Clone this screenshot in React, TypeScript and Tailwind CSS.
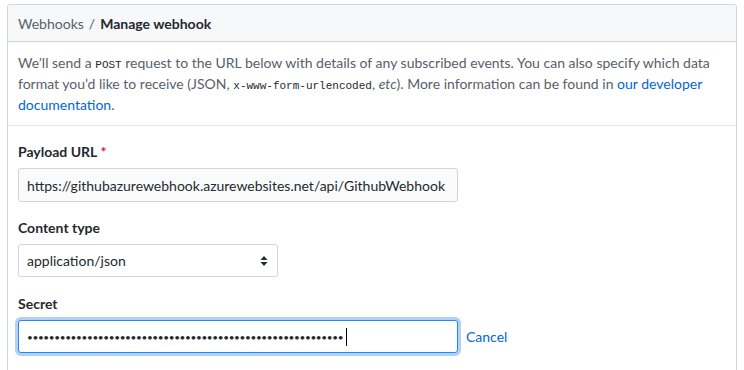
import React from "react";

export default function App() {
  const dots = "•".repeat(58);
  const mono = { fontFamily: '"Liberation Mono", monospace' };
  return (
    <div
      className="w-[744px] h-[370px] overflow-hidden bg-white pt-[4px] pl-[7px] pr-[7px]"
      style={{ fontFamily: 'Lato, "Noto Sans", sans-serif' }}
    >
      <div className="border border-[#d1d5da] rounded-t-[3px] h-[370px] text-[14px]">
        <div className="h-[37px] bg-[#f6f8fa] border-b border-[#d1d5da] flex items-center px-[10px] rounded-t-[3px] whitespace-nowrap">
          <span className="text-[#586069]">Webhooks</span>
          <span className="text-[#586069] mx-[5px]">/</span>
          <span className="text-[#24292e] font-bold">Manage webhook</span>
        </div>
        <div className="px-[10px] pt-[10px] pb-[10px] text-[#586069] leading-[21px] border-b border-[#e1e4e8] whitespace-nowrap">
          <div className="h-[21px]">
            We’ll send a{" "}
            <code className="text-[11px] text-[#24292e] leading-none" style={mono}>
              POST
            </code>{" "}
            request to the URL below with details of any subscribed events. You can also specify which data
          </div>
          <div className="h-[21px]">
            format you’d like to receive (JSON,{" "}
            <code className="text-[11px] text-[#24292e] leading-none" style={mono}>
              x-www-form-urlencoded
            </code>
            , <em>etc</em>). More information can be found in{" "}
            <span className="text-[#0366d6]">our developer</span>
          </div>
          <div className="h-[21px]">
            <span className="text-[#0366d6]">documentation</span>.
          </div>
        </div>
        <div className="px-[10px] pt-[16px]">
          <div className="text-[#24292e] font-bold leading-[20px]">
            Payload URL <span className="text-[#cb2431]">*</span>
          </div>
          <div className="mt-[6px] w-[440px] h-[34px] border border-[#d1d5da] rounded-[3px] bg-[#fafbfc] flex items-center px-[8px] text-[#24292e] whitespace-nowrap">
            https://githubazurewebhook.azurewebsites.net/api/GithubWebhook
          </div>
          <div className="mt-[16px] text-[#24292e] font-bold leading-[20px]">Content type</div>
          <div className="mt-[6px] w-[260px] h-[33px] border border-[#d1d5da] rounded-[3px] bg-white flex items-center justify-between px-[8px] text-[#24292e]">
            <span>application/json</span>
            <svg width="8" height="12" viewBox="0 0 8 12" className="mr-[1px]">
              <path d="M4 1 L7.5 5 L0.5 5 Z" fill="#24292e" />
              <path d="M4 11 L7.5 7 L0.5 7 Z" fill="#24292e" />
            </svg>
          </div>
          <div className="mt-[17px] text-[#24292e] font-bold leading-[20px]">Secret</div>
          <div className="mt-[6px] flex items-center">
            <div className="w-[440px] h-[33px] border border-[#2188ff] rounded-[3px] bg-white flex items-center px-[8px] text-[#24292e] shadow-[0_0_0_3px_rgba(3,102,214,0.3)] whitespace-nowrap overflow-hidden">
              <span className="text-[10px] tracking-[-0.35px] leading-none">{dots}</span>
              <span className="ml-[3px] w-[1px] h-[18px] bg-black" />
            </div>
            <span className="ml-[8px] text-[#0366d6]">Cancel</span>
          </div>
        </div>
      </div>
    </div>
  );
}
